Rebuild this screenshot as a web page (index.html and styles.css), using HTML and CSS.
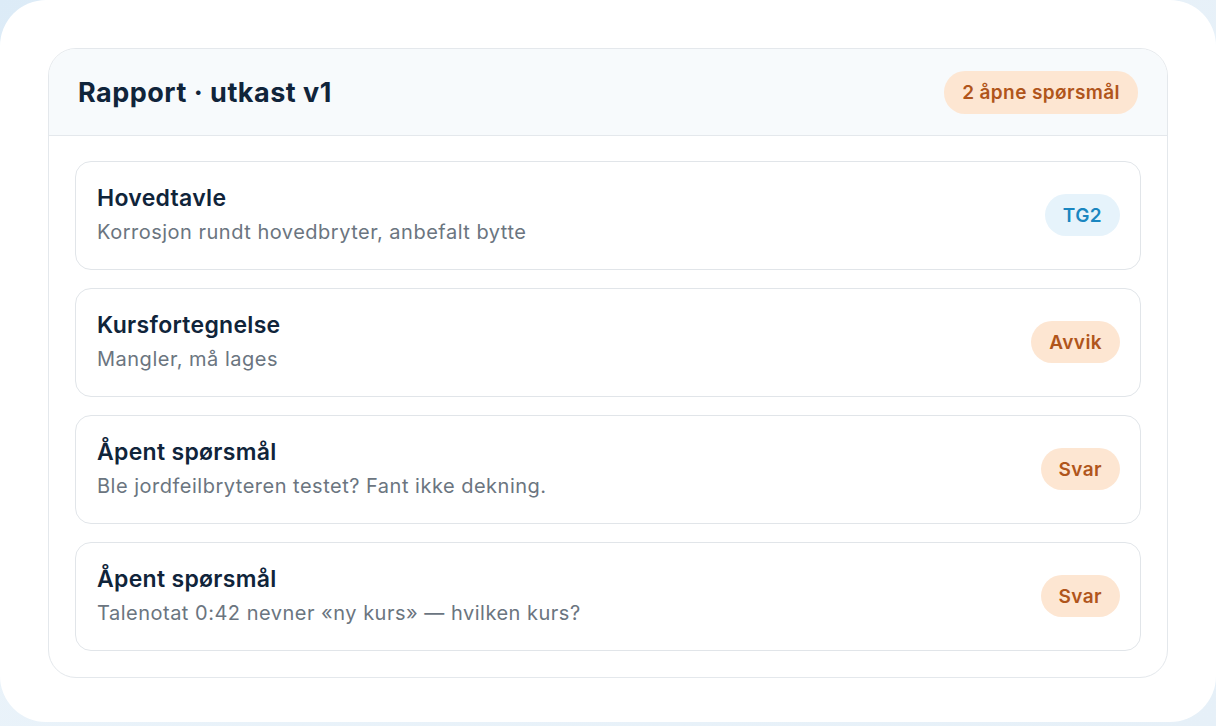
FILE: index.html
```html
<!DOCTYPE html>
<html lang="no">
<head>
    <meta charset="UTF-8">
    <meta name="viewport" content="width=device-width, initial-scale=1.0">
    <title>Rapport</title>
    <link rel="stylesheet" href="styles.css">
</head>
<body>
    <div class="sheet">
        <div class="panel">
            <div class="panel-head">
                <h2>Rapport · utkast v1</h2>
                <span class="pill warn">2 åpne spørsmål</span>
            </div>
            <div class="list">
                <div class="item">
                    <div class="item-text">
                        <h3>Hovedtavle</h3>
                        <p>Korrosjon rundt hovedbryter, anbefalt bytte</p>
                    </div>
                    <span class="pill info">TG2</span>
                </div>
                <div class="item">
                    <div class="item-text">
                        <h3>Kursfortegnelse</h3>
                        <p>Mangler, må lages</p>
                    </div>
                    <span class="pill warn">Avvik</span>
                </div>
                <div class="item">
                    <div class="item-text">
                        <h3>Åpent spørsmål</h3>
                        <p>Ble jordfeilbryteren testet? Fant ikke dekning.</p>
                    </div>
                    <span class="pill warn">Svar</span>
                </div>
                <div class="item">
                    <div class="item-text">
                        <h3>Åpent spørsmål</h3>
                        <p>Talenotat 0:42 nevner «ny kurs» — hvilken kurs?</p>
                    </div>
                    <span class="pill warn">Svar</span>
                </div>
            </div>
        </div>
    </div>
</body>
</html>
```

FILE: styles.css
```css
body {
    font-family: Inter, "Noto Sans", sans-serif;
    margin: 0;
    padding: 0;
    height: 726px;
    overflow: hidden;
    background: radial-gradient(circle at 0 0, #dcebf7 0%, #eaf3fa 40%, #e6f0f8 100%);
    color: #13263b;
}

.sheet {
    height: 722px;
    background: #ffffff;
    border-radius: 46px;
    padding: 48px;
    box-sizing: border-box;
}

.panel {
    border: 1px solid #e4e8ec;
    border-radius: 28px;
    overflow: hidden;
    background: #ffffff;
}

.panel-head {
    display: flex;
    align-items: center;
    justify-content: space-between;
    height: 86px;
    padding: 0 29px;
    background: #f7fafc;
    border-bottom: 1px solid #e4e8ec;
}

h2 {
    margin: 0;
    font-size: 27px;
    font-weight: 700;
    letter-spacing: 0.5px;
    color: #10243a;
}

.list {
    display: flex;
    flex-direction: column;
    gap: 18px;
    padding: 25px 26px 26px;
}

.item {
    display: flex;
    align-items: center;
    justify-content: space-between;
    padding: 22px 20px 23px 21px;
    border: 1px solid #e1e5e9;
    border-radius: 16px;
}

h3 {
    margin: 0;
    font-size: 23px;
    line-height: 28px;
    font-weight: 600;
    letter-spacing: 0.3px;
    color: #10243a;
}

.item-text p {
    margin: 6px 0 0;
    font-size: 20px;
    line-height: 28px;
    letter-spacing: 0.5px;
    color: #6b7580;
}

.pill {
    display: inline-flex;
    align-items: center;
    height: 42px;
    padding: 0 18px;
    border-radius: 21px;
    font-size: 19px;
    font-weight: 600;
    letter-spacing: 0.4px;
}

.pill.warn {
    background: #fde6d2;
    color: #b0551b;
}

.pill.info {
    background: #e6f3fb;
    color: #1a86c0;
}

.panel-head .pill {
    height: 43px;
}
```
